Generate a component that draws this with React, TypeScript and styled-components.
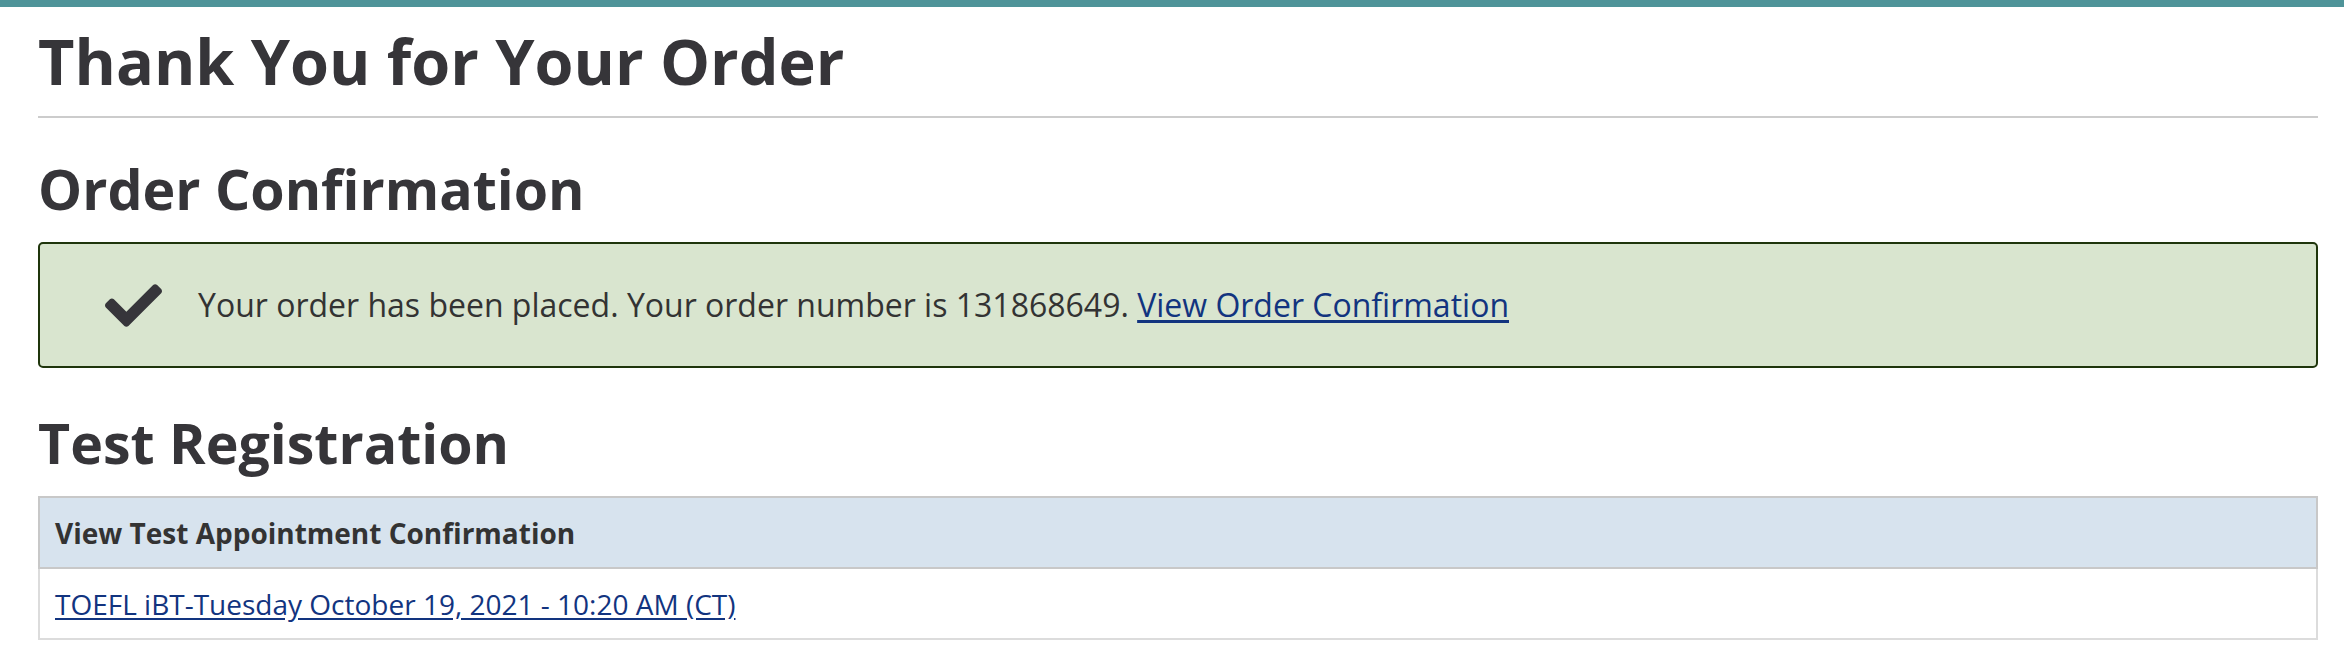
import React from "react";
import styled, { createGlobalStyle } from "styled-components";

const GlobalStyle = createGlobalStyle`
  html, body {
    margin: 0;
    padding: 0;
    background: #ffffff;
    font-family: "Open Sans", "Liberation Sans", sans-serif;
    color: #333333;
  }
`;

const TopBar = styled.div`
  height: 7px;
  background: #4f9499;
`;

const Main = styled.main`
  padding: 0 26px 40px 38px;
`;

const PageTitle = styled.h1`
  margin: 21px 0 0;
  padding-bottom: 22px;
  border-bottom: 2px solid #cccccc;
  font-size: 63px;
  line-height: 66px;
  font-weight: 700;
  color: #363539;
`;

const SectionTitle = styled.h2<{ $top: number }>`
  margin: ${(p) => p.$top}px 0 24px;
  font-size: 55.5px;
  line-height: 58px;
  font-weight: 700;
  color: #363539;
`;

const Alert = styled.div`
  display: flex;
  align-items: center;
  gap: 36px;
  box-sizing: border-box;
  height: 126px;
  padding: 0 24px 0 65px;
  background: #d9e5cf;
  border: 2px solid #1f350c;
  border-radius: 5px;
`;

const CheckIcon = styled.svg`
  width: 57px;
  height: 43px;
  flex: none;
  fill: #36353a;
`;

const AlertText = styled.p`
  margin: 0;
  font-size: 32px;
  line-height: 44px;
  color: #333333;
`;

const Link = styled.a<{ $size: number }>`
  color: #12347f;
  text-decoration: underline;
  text-underline-offset: 3px;
  font-size: ${(p) => p.$size}px;
`;

const Table = styled.table`
  width: 100%;
  border-collapse: collapse;
`;

const HeadCell = styled.th`
  height: 71px;
  box-sizing: border-box;
  padding: 0 15px;
  text-align: left;
  background: #d7e3ee;
  border: 2px solid #c8c8c8;
  font-size: 28px;
  font-weight: 700;
  color: #333333;
`;

const BodyCell = styled.td`
  height: 71px;
  box-sizing: border-box;
  padding: 0 15px;
  border: 2px solid #dcdcdc;
  border-top: none;
  font-size: 28px;
`;

export default function App() {
  return (
    <>
      <GlobalStyle />
      <TopBar />
      <Main>
        <PageTitle>Thank You for Your Order</PageTitle>
        <SectionTitle $top={42}>Order Confirmation</SectionTitle>
        <Alert>
          <CheckIcon viewBox="0 65 512 382" aria-hidden="true">
            <path d="M173.898 439.404l-166.4-166.4c-9.997-9.997-9.997-26.206 0-36.204l36.203-36.204c9.997-9.998 26.207-9.998 36.204 0L192 312.69 432.095 72.596c9.997-9.997 26.207-9.997 36.204 0l36.203 36.204c9.997 9.997 9.997 26.206 0 36.204l-294.4 294.401c-9.998 9.997-26.207 9.997-36.204-.001z" />
          </CheckIcon>
          <AlertText>
            Your order has been placed. Your order number is 131868649.{" "}
            <Link $size={32} href="#">View Order Confirmation</Link>
          </AlertText>
        </Alert>
        <SectionTitle $top={46}>Test Registration</SectionTitle>
        <Table>
          <thead>
            <tr>
              <HeadCell>View Test Appointment Confirmation</HeadCell>
            </tr>
          </thead>
          <tbody>
            <tr>
              <BodyCell>
                <Link $size={28} href="#">TOEFL iBT-Tuesday October 19, 2021 - 10:20 AM (CT)</Link>
              </BodyCell>
            </tr>
          </tbody>
        </Table>
      </Main>
    </>
  );
}
